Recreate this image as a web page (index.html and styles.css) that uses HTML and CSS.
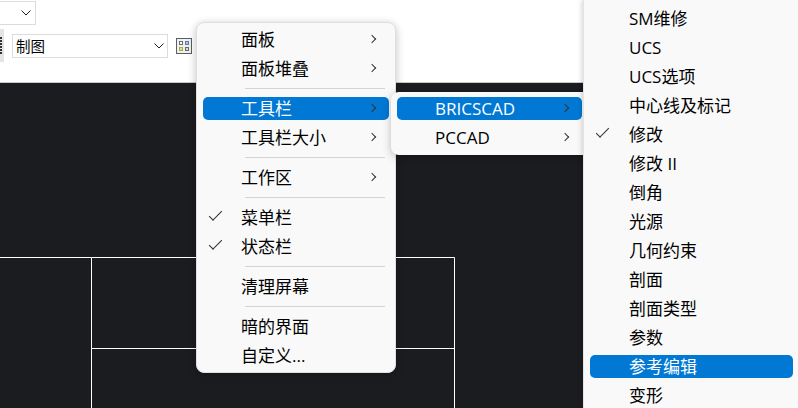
FILE: index.html
```html
<!DOCTYPE html>
<html lang="zh-CN">
<head>
    <meta charset="UTF-8">
    <meta name="viewport" content="width=device-width, initial-scale=1.0">
    <title>工具栏菜单</title>
    <link rel="stylesheet" href="styles.css">
</head>
<body>
    <div class="toolbar">
        <div class="tool-row top-row">
            <div class="combo combo-top"><svg class="combo-arrow" viewBox="0 0 10 6"><path d="M.5.5 5 5 9.500.5"/></svg></div>
        </div>
        <div class="tool-row">
            <div class="grip"><div class="grip-dots"></div></div>
            <div class="combo combo-space">
                <span>制图</span>
                <svg class="combo-arrow" viewBox="0 0 10 6"><path d="M.5.5 5 5 9.500.5"/></svg>
            </div>
            <svg class="space-icon" viewBox="0 0 16 16">
                <rect x=".5" y=".5" width="15" height="15" fill="#f0f0f0" stroke="#5a5f66"/>
                <rect x="3.500" y="3.500" width="3" height="3" fill="#fff" stroke="#6b6b6b"/>
                <rect x="9.500" y="3.500" width="3" height="3" fill="#a9c4e4" stroke="#5b7fa8"/>
                <rect x="3.500" y="9.500" width="3" height="3" fill="#d8e58a" stroke="#9db04a"/>
                <rect x="9.500" y="9.500" width="3" height="3" fill="#e8d8c0" stroke="#6b6b6b"/>
            </svg>
        </div>
    </div>

    <div class="canvas">
        <svg class="drawing" viewBox="0 0 798 325">
            <path d="M0 174.500H91.500V325M91.500 265.500H454.500M91.500 174.500H454.500V325"/>
        </svg>
    </div>

    <div class="menu menu-main">
        <div class="item"><span class="label">面板</span><span class="chevron"></span></div>
        <div class="item"><span class="label">面板堆叠</span><span class="chevron"></span></div>
        <div class="sep"></div>
        <div class="item active"><span class="label">工具栏</span><span class="chevron"></span></div>
        <div class="item"><span class="label">工具栏大小</span><span class="chevron"></span></div>
        <div class="sep"></div>
        <div class="item"><span class="label">工作区</span><span class="chevron"></span></div>
        <div class="sep"></div>
        <div class="item checked"><span class="label">菜单栏</span></div>
        <div class="item checked"><span class="label">状态栏</span></div>
        <div class="sep"></div>
        <div class="item"><span class="label">清理屏幕</span></div>
        <div class="sep"></div>
        <div class="item"><span class="label">暗的界面</span></div>
        <div class="item"><span class="label">自定义...</span></div>
    </div>

    <div class="menu menu-sub">
        <div class="item active"><span class="label">BRICSCAD</span><span class="chevron"></span></div>
        <div class="item"><span class="label">PCCAD</span><span class="chevron"></span></div>
    </div>

    <div class="menu menu-list">
        <div class="item"><span class="label">SM维修</span></div>
        <div class="item"><span class="label">UCS</span></div>
        <div class="item"><span class="label">UCS选项</span></div>
        <div class="item"><span class="label">中心线及标记</span></div>
        <div class="item checked"><span class="label">修改</span></div>
        <div class="item"><span class="label">修改 II</span></div>
        <div class="item"><span class="label">倒角</span></div>
        <div class="item"><span class="label">光源</span></div>
        <div class="item"><span class="label">几何约束</span></div>
        <div class="item"><span class="label">剖面</span></div>
        <div class="item"><span class="label">剖面类型</span></div>
        <div class="item"><span class="label">参数</span></div>
        <div class="item active"><span class="label">参考编辑</span></div>
        <div class="item"><span class="label">变形</span></div>
    </div>
</body>
</html>
```

FILE: styles.css
```css
html, body {
    height: 100%;
}
body {
    margin: 0;
    background-color: #1a1c20;
    font-family: "Open Sans", "Noto Sans CJK SC", sans-serif;
    color: #000;
    overflow: hidden;
    position: relative;
}
.toolbar {
    height: 82px;
    background-color: #fff;
    border-bottom: 1px solid #c8c8c8;
}
.tool-row {
    display: flex;
    align-items: center;
}
.top-row {
    height: 29px;
    align-items: flex-start;
    padding-top: 1px;
    box-sizing: border-box;
}
.combo {
    display: flex;
    align-items: center;
    justify-content: space-between;
    box-sizing: border-box;
    height: 24px;
    border: 1px solid #dcdcdc;
    background-color: #fff;
}
.combo-top {
    width: 36px;
    border-left: none;
    justify-content: flex-end;
    padding-right: 4px;
}
.combo-space {
    width: 156px;
    margin-left: 8px;
    padding: 0 3px;
    font-size: 14.500px;
}
.combo-arrow {
    width: 10px;
    height: 6px;
    fill: none;
    stroke: #222;
    stroke-width: 1;
}
.grip {
    display: flex;
    align-items: center;
    width: 4px;
    height: 33px;
    background-color: #e4e4e4;
}
.grip-dots {
    width: 2px;
    height: 18px;
    background: repeating-linear-gradient(#333 0, #333 2px, transparent 2px, transparent 3px);
}
.space-icon {
    width: 16px;
    height: 16px;
    margin-left: 8px;
}
.canvas {
    height: 325px;
}
.drawing {
    display: block;
    width: 798px;
    height: 325px;
    fill: none;
    stroke: #fff;
    stroke-width: 1;
}

/* menus float over everything */
.menu {
    position: absolute;
    display: flex;
    flex-direction: column;
    box-sizing: border-box;
    background-color: #f9f9f9;
    font-size: 17px;
}
.menu-main {
    left: 196px;
    top: 22px;
    width: 200px;
    height: 351px;
    border: 1px solid #e0e0e0;
    border-radius: 8px;
    padding: 2px 6px;
    box-shadow: 0 2px 8px rgba(0, 0, 0, 0.25);
}
.menu-sub {
    left: 391px;
    top: 92px;
    width: 195px;
    height: 63px;
    border-radius: 8px 0 0 8px;
    padding: 2px 4px 0 6px;
    box-shadow: 0 2px 8px rgba(0, 0, 0, 0.25);
}
.menu-list {
    left: 583px;
    top: 0;
    width: 215px;
    height: 408px;
    border-left: 1px solid #e4e4e4;
    padding: 4px 5px 0 6px;
    box-shadow: -1px 0 5px rgba(0, 0, 0, 0.18);
}
.item {
    position: relative;
    flex: none;
    display: flex;
    align-items: center;
    height: 23px;
    margin: 3px 0;
    border-radius: 5px;
    padding-left: 38px;
    line-height: 23px;
    white-space: nowrap;
}
.menu-list .item {
    padding-left: 39px;
}
.item.active {
    background-color: #0078d4;
    color: #fff;
}
.chevron {
    position: absolute;
    right: 14px;
    top: 8px;
    width: 5px;
    height: 5px;
    border-top: 1.2px solid #333;
    border-right: 1.2px solid #333;
    transform: rotate(45deg);
}
.item.checked::before {
    content: "";
    position: absolute;
    left: 6px;
    top: 5px;
    width: 12px;
    height: 5px;
    border-left: 1.500px solid #333;
    border-bottom: 1.500px solid #333;
    transform: rotate(-45deg);
}
.sep {
    flex: none;
    height: 1px;
    margin: 5px 4px 5px 42px;
    background-color: #d4d4d4;
}
```
